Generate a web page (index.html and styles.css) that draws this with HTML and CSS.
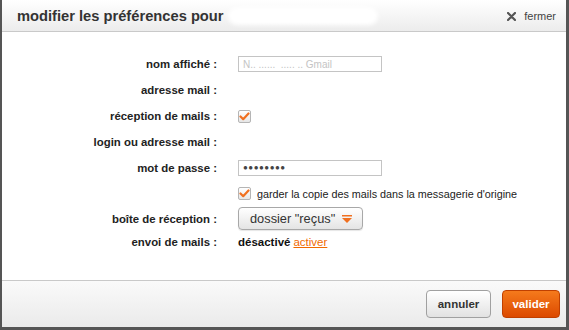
FILE: index.html
```
<!DOCTYPE html>
<html lang="fr">
<head>
    <meta charset="UTF-8">
    <title>modifier les préférences</title>
    <link rel="stylesheet" href="styles.css">
</head>
<body>
    <div class="dialog">
        <!-- En-tête -->
        <div class="dialog-header">
            <h1>modifier les préférences pour <span class="masked"></span></h1>
            <a class="close" href="#">
                <svg width="9" height="9" viewBox="0 0 9 9"><path d="M1 1 L8 8 M8 1 L1 8" stroke="#555" stroke-width="2.2" stroke-linecap="round"/></svg>
                fermer
            </a>
        </div>

        <!-- Formulaire -->
        <div class="dialog-body">
            <div class="form-grid">
                <label class="form-label">nom affiché :</label>
                <div class="form-field"><input type="text" class="text-input faded" value="N.. ......  ..... .. Gmail"></div>

                <label class="form-label">adresse mail :</label>
                <div class="form-field"><span class="masked-line"></span></div>

                <label class="form-label">réception de mails :</label>
                <div class="form-field"><span class="check"><svg width="11" height="9" viewBox="0 0 11 9"><path d="M1.5 4.5 L4.2 7.2 L9.5 1.5" fill="none" stroke="#f07020" stroke-width="2.2" stroke-linecap="round" stroke-linejoin="round"/></svg></span></div>

                <label class="form-label">login ou adresse mail :</label>
                <div class="form-field"><span class="masked-line"></span></div>

                <label class="form-label">mot de passe :</label>
                <div class="form-field"><input type="text" class="text-input pwd" value="●●●●●●●●"></div>

                <span></span>
                <div class="form-field">
                    <span class="check"><svg width="11" height="9" viewBox="0 0 11 9"><path d="M1.5 4.5 L4.2 7.2 L9.5 1.5" fill="none" stroke="#f07020" stroke-width="2.2" stroke-linecap="round" stroke-linejoin="round"/></svg></span>
                    <span class="check-text">garder la copie des mails dans la messagerie d'origine</span>
                </div>

                <label class="form-label">boîte de réception :</label>
                <div class="form-field">
                    <button class="dropdown">dossier "reçus"
                        <svg width="10" height="8" viewBox="0 0 10 8"><rect x="0" y="0" width="10" height="1.5" fill="#f07020"/><path d="M0 3 L10 3 L5 8 Z" fill="#f07020"/></svg>
                    </button>
                </div>

                <label class="form-label">envoi de mails :</label>
                <div class="form-field"><b class="status">désactivé</b> <a href="#" class="link">activer</a></div>
            </div>
        </div>

        <!-- Boutons -->
        <div class="dialog-footer">
            <button class="btn btn-cancel">annuler</button>
            <button class="btn btn-ok">valider</button>
        </div>
    </div>
</body>
</html>
```

FILE: styles.css
```
body {
    margin: 0;
    font-family: "Liberation Sans", Arial, sans-serif;
    background-color: #fff;
}

.dialog {
    width: 564px;
    height: 327px;
    border-left: 2px solid #555;
    border-right: 3px solid #555;
    border-bottom: 3px solid #555;
    display: flex;
    flex-direction: column;
    background-color: #fff;
}

/* Header */
.dialog-header {
    height: 31px;
    flex: none;
    display: flex;
    align-items: center;
    justify-content: space-between;
    padding: 0 10px 0 15px;
    background: linear-gradient(#ffffff, #ececec);
    border-bottom: 1px solid #c9c9c9;
}

.dialog-header h1 {
    margin: 0;
    font-size: 14.7px;
    font-weight: bold;
    color: #333;
    display: flex;
    align-items: center;
}

.masked {
    display: inline-block;
    width: 150px;
    height: 18px;
    margin-left: 4px;
    background-color: #fff;
    border-radius: 9px;
    filter: blur(2px);
}

.close {
    font-size: 11px;
    color: #444;
    text-decoration: none;
    display: flex;
    align-items: center;
    gap: 8px;
    padding-top: 1px;
}

/* Body */
.dialog-body {
    flex: 1;
    padding-top: 20px;
}

.form-grid {
    display: grid;
    grid-template-columns: 215px 1fr;
    grid-template-rows: 24px 27px 26px 26px 25px 27px 23px 24px;
    column-gap: 21px;
}

.form-label {
    text-align: right;
    font-size: 11.4px;
    font-weight: bold;
    color: #222;
    align-self: center;
}

.form-field {
    display: flex;
    align-items: center;
    font-size: 11.5px;
    color: #222;
}

.text-input {
    width: 144px;
    height: 16px;
    box-sizing: border-box;
    border: 1px solid #c4c4c4;
    padding: 0 4px;
    font-family: inherit;
    font-size: 10px;
    color: #333;
    margin: 0;
}

.faded {
    color: #c4c4c4;
}

.pwd {
    font-size: 8px;
    letter-spacing: 0.5px;
    color: #444;
}

.masked-line {
    display: block;
    width: 160px;
    height: 14px;
}

.check {
    width: 13px;
    height: 13px;
    box-sizing: border-box;
    border: 1px solid #b5b5b5;
    border-radius: 2px;
    background: linear-gradient(#ffffff, #e6e6e6);
    display: flex;
    align-items: center;
    justify-content: center;
}

.check-text {
    margin-left: 6px;
    font-size: 10.8px;
}

.dropdown {
    width: 125px;
    height: 23px;
    border: 1px solid #a8a8a8;
    border-radius: 4px;
    background: linear-gradient(#ffffff, #e4e4e4);
    font-family: inherit;
    font-size: 12.8px;
    color: #333;
    display: flex;
    align-items: center;
    gap: 7px;
    padding: 0 0 0 11px;
    box-shadow: 0 1px 1px rgba(0, 0, 0, 0.1);
}

.status {
    color: #111;
}

.link {
    color: #f06a00;
    margin-left: 3px;
    font-size: 11.5px;
}

/* Footer */
.dialog-footer {
    flex: none;
    height: 46px;
    border-top: 1px solid #c9c9c9;
    background: linear-gradient(#fafafa, #eaeaea);
    display: flex;
    align-items: center;
    justify-content: flex-end;
    gap: 11px;
    padding-right: 6px;
}

.btn {
    height: 28px;
    border-radius: 4px;
    font-family: inherit;
    font-size: 11.5px;
    font-weight: bold;
    cursor: pointer;
}

.btn-cancel {
    width: 65px;
    border: 1px solid #a0a0a0;
    background: linear-gradient(#ffffff, #e2e2e2);
    color: #333;
}

.btn-ok {
    width: 58px;
    border: 1px solid #c04000;
    background: linear-gradient(#f57a1c, #dc4a00);
    color: #fff;
}
```
